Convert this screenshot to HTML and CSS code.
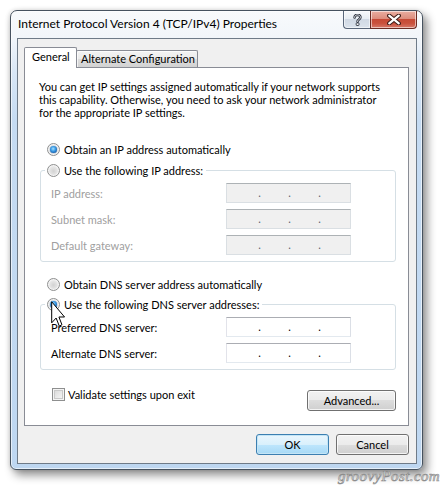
FILE: index.html
```html
<!DOCTYPE html>
<html>
<head>
<meta charset="utf-8">
<title>Internet Protocol Version 4 (TCP/IPv4) Properties</title>
<link rel="stylesheet" href="styles.css">
</head>
<body>
<div class="window">
  <div class="titlebar">
    <div class="title">Internet Protocol Version 4 (TCP/IPv4) Properties</div>
    <div class="caption-buttons">
      <div class="cap help">
        <svg width="9" height="12" viewBox="0 0 9 12">
          <path d="M1.6 3.4 C1.6 1.6 3 0.9 4.5 0.9 C6.2 0.9 7.4 1.9 7.4 3.3 C7.4 4.6 6.4 5.1 5.6 5.7 C4.9 6.2 4.6 6.6 4.6 7.6" fill="none" stroke="#2e3440" stroke-width="2.6" stroke-linecap="round"/>
          <path d="M1.6 3.4 C1.6 1.6 3 0.9 4.5 0.9 C6.2 0.9 7.4 1.9 7.4 3.3 C7.4 4.6 6.4 5.1 5.6 5.7 C4.9 6.2 4.6 6.6 4.6 7.6" fill="none" stroke="#f4f6f8" stroke-width="0.9" stroke-linecap="round"/>
          <rect x="3.2" y="8.9" width="2.8" height="2.6" rx="0.6" fill="#f4f6f8" stroke="#2e3440" stroke-width="0.9"/>
        </svg>
      </div>
      <div class="cap close">
        <svg width="14" height="11" viewBox="0 0 14 11">
          <path d="M2.2 1.6 L11.8 9.4 M11.8 1.6 L2.2 9.4" stroke="#3b1a16" stroke-width="4.2" stroke-linecap="round"/>
          <path d="M2.2 1.6 L11.8 9.4 M11.8 1.6 L2.2 9.4" stroke="#ffffff" stroke-width="2.2" stroke-linecap="round"/>
        </svg>
      </div>
    </div>
  </div>

  <div class="client">
    <div class="tabs">
      <div class="tab active">General</div>
      <div class="tab alt">Alternate Configuration</div>
    </div>

    <div class="pane">
      <p class="intro">You can get IP settings assigned automatically if your network supports<br>this capability. Otherwise, you need to ask your network administrator<br>for the appropriate IP settings.</p>

      <div class="option first"><span class="radio checked"></span>Obtain an IP address automatically</div>

      <fieldset class="group disabled ip-group">
        <legend><span class="radio"></span>Use the following IP address:</legend>
        <div class="field"><span class="lbl">IP address:</span><span class="ipbox"><span></span><span class="dot">.</span><span></span><span class="dot">.</span><span></span><span class="dot">.</span><span></span></span></div>
        <div class="field"><span class="lbl">Subnet mask:</span><span class="ipbox"><span></span><span class="dot">.</span><span></span><span class="dot">.</span><span></span><span class="dot">.</span><span></span></span></div>
        <div class="field"><span class="lbl">Default gateway:</span><span class="ipbox"><span></span><span class="dot">.</span><span></span><span class="dot">.</span><span></span><span class="dot">.</span><span></span></span></div>
      </fieldset>

      <div class="option dns-auto"><span class="radio"></span>Obtain DNS server address automatically</div>

      <fieldset class="group dns-group">
        <legend><span class="radio checked"></span>Use the following DNS server addresses:</legend>
        <div class="field"><span class="lbl">Preferred DNS server:</span><span class="ipbox"><span></span><span class="dot">.</span><span></span><span class="dot">.</span><span></span><span class="dot">.</span><span></span></span></div>
        <div class="field"><span class="lbl">Alternate DNS server:</span><span class="ipbox"><span></span><span class="dot">.</span><span></span><span class="dot">.</span><span></span><span class="dot">.</span><span></span></span></div>
      </fieldset>

      <div class="bottom-row">
        <div class="check"><span class="checkbox"></span>Validate settings upon exit</div>
        <div class="btn advanced">Advanced...</div>
      </div>
    </div>

    <div class="dialog-buttons">
      <div class="btn ok">OK</div>
      <div class="btn">Cancel</div>
    </div>
  </div>
</div>

<svg class="cursor" width="14" height="26" viewBox="0 0 12 20" preserveAspectRatio="none">
  <path d="M0.6 0.6 V16.8 L4.4 13.1 L7.1 19.3 L9.4 18.3 L6.8 12.3 H11.6 Z" fill="#ffffff" stroke="#000000" stroke-width="1" vector-effect="non-scaling-stroke" stroke-linejoin="miter"/>
</svg>

<div class="watermark">groovyPost.com</div>
</body>
</html>
```
FILE: styles.css
```css
html, body {
  margin: 0;
}

body {
  width: 442px;
  height: 489px;
  box-sizing: border-box;
  padding: 10px 0 0 10px;
  overflow: hidden;
  position: relative;
  background: #ffffff;
  font-family: "Lato", "Liberation Sans", sans-serif;
  font-size: 11px;
  color: #000000;
}

/* ---------- window frame ---------- */
.window {
  width: 413px;
  height: 460px;
  box-sizing: border-box;
  border: 1px solid #46525f;
  border-radius: 7px 7px 6px 6px;
  background: linear-gradient(to bottom, #f8fafc 0, #f2f6fa 26px, #d9e7f6 60px, #c5dbf2 110px, #bed7f1 100%);
  box-shadow: inset 0 0 0 1px rgba(255, 255, 255, 0.6),
              4px 5px 10px rgba(0, 0, 0, 0.45),
              -1px 0 4px rgba(0, 0, 0, 0.12);
  display: flex;
  flex-direction: column;
}

.titlebar {
  flex: none;
  height: 27px;
  display: flex;
  justify-content: space-between;
  align-items: flex-start;
}

.title {
  padding: 5px 0 0 7px;
  font-size: 12px;
  line-height: 15px;
  color: #000000;
  white-space: nowrap;
}

.caption-buttons {
  display: flex;
  margin-right: 5px;
}

.cap {
  height: 18px;
  box-sizing: border-box;
  border: 1px solid #59677a;
  border-top: 0;
  display: flex;
  align-items: center;
  justify-content: center;
  box-shadow: inset 0 0 0 1px rgba(255, 255, 255, 0.55);
}

.cap.help {
  width: 27px;
  border-right: 0;
  border-radius: 0 0 0 4px;
  background: linear-gradient(to bottom, #f7f9fb 0, #e7edf3 45%, #d0d9e4 50%, #dbe3ec 100%);
}

.cap.close {
  width: 47px;
  border-color: #6b2b23;
  border-radius: 0 0 4px 0;
  background: linear-gradient(to bottom, #eaaea1 0, #dd8d7d 45%, #c64a36 50%, #c9513c 72%, #d7796a 100%);
}

/* ---------- client area ---------- */
.client {
  flex: 1;
  margin: 0 5px 5px 6px;
  border: 1px solid #6f7b88;
  background: #f0f0f0;
  padding-top: 8px;
  display: flex;
  flex-direction: column;
}

.tabs {
  display: flex;
  align-items: flex-end;
  height: 20px;
  margin: 0 7px 0 6px;
}

.tab {
  height: 17px;
  box-sizing: border-box;
  border: 1px solid #898c95;
  border-bottom: 0;
  border-radius: 2px 2px 0 0;
  line-height: 16px;
  white-space: nowrap;
  background: linear-gradient(to bottom, #f3f3f3 0, #ebebeb 50%, #dddddd 50%, #d2d2d2 100%);
  box-shadow: inset 1px 1px 0 rgba(255, 255, 255, 0.7);
}

.tab.active {
  position: relative;
  z-index: 1;
  width: 53px;
  height: 21px;
  margin-bottom: -1px;
  padding: 1px 0 0 7px;
  background: #ffffff;
  box-shadow: none;
}

.tab.alt {
  width: 122px;
  margin-left: -1px;
  padding-left: 4px;
}

.pane {
  margin: 0 7px 0 6px;
  height: 359px;
  box-sizing: border-box;
  border: 1px solid #898c95;
  background: #ffffff;
  display: flex;
  flex-direction: column;
}

.intro {
  margin: 12px 0 0 14px;
  line-height: 13px;
  white-space: nowrap;
}

/* ---------- radios ---------- */
.option {
  display: flex;
  align-items: center;
  gap: 4px;
  height: 16px;
  padding-left: 22px;
  white-space: nowrap;
}

.option.first {
  margin-top: 22px;
}

.option.dns-auto {
  margin-top: 14px;
}

.radio {
  flex: none;
  width: 13px;
  height: 13px;
  box-sizing: border-box;
  border-radius: 50%;
  border: 1px solid #8e8f8f;
  background: radial-gradient(circle at 50% 55%, #d2d2d2 0, #e4e4e4 45%, #f6f6f6 80%);
  box-shadow: inset 0 0 0 1px #f4f4f4;
  display: flex;
  align-items: center;
  justify-content: center;
}

.radio.checked::after {
  content: "";
  width: 7px;
  height: 7px;
  border-radius: 50%;
  background: radial-gradient(circle at 45% 40%, #a9e0ff 0, #3c9de6 40%, #1359a8 80%, #0e4a8c 100%);
  box-shadow: 0 0 1px #2d6fb3;
}

/* ---------- group boxes ---------- */
.group {
  margin: 5px 12px 0 15px;
  padding: 5px 0 6px 10px;
  border: 1px solid #d5dfe5;
  border-radius: 3px;
  min-inline-size: 0;
  display: flex;
  flex-direction: column;
  gap: 6px;
}

.dns-group {
  margin-top: 4px;
}

.group legend {
  margin-left: -6px;
  padding: 0 3px 0 2px;
  height: 16px;
  display: flex;
  align-items: center;
  gap: 4px;
  white-space: nowrap;
}

.field {
  display: flex;
  align-items: center;
}

.lbl {
  width: 175px;
  white-space: nowrap;
}

.disabled .lbl {
  color: #a0a0a0;
}

.ipbox {
  width: 125px;
  height: 20px;
  box-sizing: border-box;
  border: 1px solid;
  border-color: #abadb3 #dbdfe6 #e3e9ef #e2e3ea;
  background: #ffffff;
  display: grid;
  grid-template-columns: 31px 3px 27px 3px 27px 3px 1fr;
  line-height: 18px;
}

.ipbox .dot {
  text-align: center;
  color: #000000;
}

.disabled .ipbox {
  background: #f0f0f0;
  border-color: #adb2b5 #dadfe3 #dadfe3 #dadfe3;
}

.disabled .ipbox .dot {
  color: #5a6470;
}

/* ---------- bottom row ---------- */
.bottom-row {
  display: flex;
  justify-content: space-between;
  align-items: flex-start;
  padding: 0 12px 0 27px;
}

.check {
  margin-top: 18px;
  display: flex;
  align-items: center;
  gap: 3px;
  height: 13px;
  white-space: nowrap;
}

.checkbox {
  width: 13px;
  height: 13px;
  box-sizing: border-box;
  border: 1px solid #8e8f8f;
  background: linear-gradient(135deg, #d4d4d4 0, #ececec 60%, #fafafa 100%);
  box-shadow: inset 0 0 0 1px #f4f4f4, inset 0 0 0 2px #c9c9c9;
}

.btn {
  width: 73px;
  height: 21px;
  box-sizing: border-box;
  border: 1px solid #707070;
  border-radius: 3px;
  background: linear-gradient(to bottom, #f2f2f2 0, #ebebeb 50%, #dddddd 50%, #cfcfcf 100%);
  box-shadow: inset 0 0 0 1px rgba(255, 255, 255, 0.75);
  text-align: center;
  line-height: 19px;
  white-space: nowrap;
}

.btn.advanced {
  width: 89px;
  margin-top: 20px;
}

.btn.ok {
  border-color: #3c7fb1;
  background: linear-gradient(to bottom, #eaf6fd 0, #d9f0fc 50%, #bee6fd 50%, #a7d9f5 100%);
  box-shadow: inset 0 0 0 1px #c4e5f6;
}

.dialog-buttons {
  display: flex;
  justify-content: flex-end;
  gap: 7px;
  margin: 8px 7px 0 0;
}

/* ---------- overlays ---------- */
.cursor {
  position: absolute;
  left: 51px;
  top: 301px;
}

.watermark {
  position: absolute;
  left: 338px;
  top: 468px;
  font-family: "Liberation Serif", serif;
  font-style: italic;
  font-size: 15px;
  letter-spacing: 0.4px;
  color: #f2f2f2;
  -webkit-text-stroke: 0.7px #8c8c8c;
  white-space: nowrap;
}
```
